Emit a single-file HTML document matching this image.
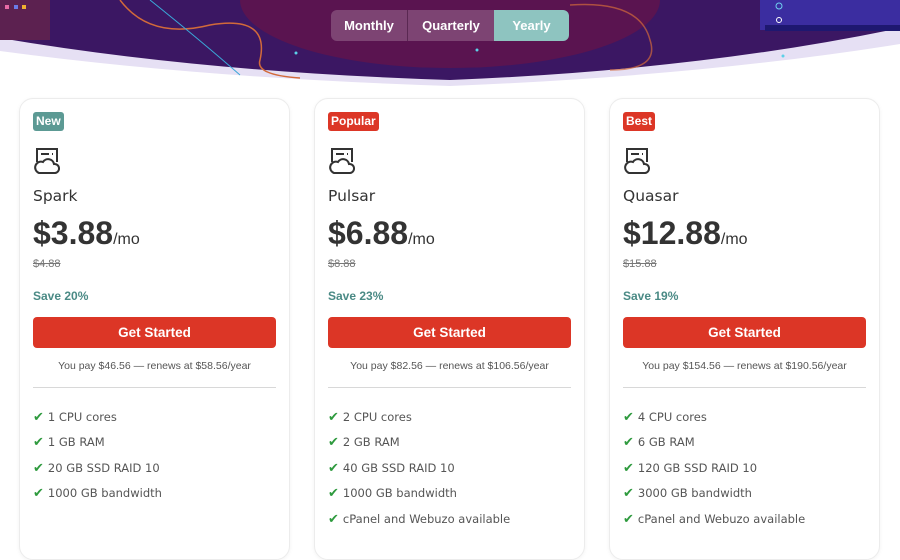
<!DOCTYPE html>
<html><head><style>
body{margin:0;width:900px;height:542px;overflow:hidden;background:#fff;font-family:"Liberation Sans",sans-serif;position:relative}
.hdr{position:absolute;left:0;top:0}
.tog{position:absolute;left:331px;top:10px;height:31px;display:flex;border-radius:6px;overflow:hidden;font-weight:bold;font-size:13px;color:#fff}
.tog div{display:flex;align-items:center;justify-content:center;background:#7d4473}
.card{position:absolute;top:98px;width:269px;height:460px;border:1px solid #ececec;border-radius:14px;background:#fff;box-shadow:0 1px 4px rgba(0,0,0,.05)}
.in{position:absolute;left:13px;right:13px;top:0}
.badge{position:absolute;top:13px;height:19px;line-height:19px;padding:0 3px;border-radius:3px;color:#fff;font-weight:bold;font-size:12px}
.icon{position:absolute;top:47px}
.name{position:absolute;top:88px;font-size:15.5px;color:#333;font-family:"DejaVu Sans",sans-serif}
.price{position:absolute;top:116px;font-size:32px;font-weight:bold;color:#333;white-space:nowrap}
.price span{font-size:16px;font-weight:normal}
.old{position:absolute;top:159px;font-size:11px;color:#777;text-decoration:line-through}
.save{position:absolute;top:190px;font-size:12px;font-weight:bold;color:#4a8a85}
.btn{position:absolute;top:218px;left:0;width:243px;height:31px;background:#dc3626;border-radius:4px;color:#fff;font-weight:bold;font-size:13.5px;text-align:center;line-height:31px}
.pay{position:absolute;top:261px;left:0;width:243px;text-align:center;font-size:10.5px;color:#555}
.hr{position:absolute;top:288px;left:0;width:243px;border-top:1px solid #d8d8d8}
.f{position:absolute;left:0;font-size:12.5px;color:#555;white-space:nowrap;font-family:"DejaVu Sans",sans-serif;font-size:11.5px}
.f b{color:#2e9a3e;font-size:13px;margin-right:4px}
</style></head><body>
<svg class="hdr" width="900" height="100" viewBox="0 0 900 100">
<path d="M0 0H900V38Q700 70 450 80Q200 72 0 45Z" fill="#e6e0f4" transform="translate(0,6)"/>
<path d="M0 0H900V28Q700 70 450 80Q200 72 0 38Z" fill="#3b1763"/>
<ellipse cx="450" cy="0" rx="210" ry="68" fill="#5a1450"/>
<path d="M120 0Q150 40 210 25Q270 15 260 60Q255 75 300 78" stroke="#d26a3a" stroke-width="1.5" fill="none"/>
<path d="M570 5Q640 0 650 40Q660 70 610 70" stroke="#d26a3a" stroke-width="1.5" fill="none" opacity=".7"/>
<path d="M150 0Q200 40 240 75" stroke="#3aa8d8" stroke-width="1" fill="none"/>
<rect x="0" y="0" width="50" height="40" fill="#5c2150"/>
<rect x="5" y="5" width="4" height="4" fill="#e86aa6"/><rect x="14" y="5" width="4" height="4" fill="#6a7ae8"/><rect x="22" y="5" width="4" height="4" fill="#f0b030"/>
<rect x="760" y="0" width="140" height="30" fill="#3b2da0"/>
<rect x="765" y="25" width="135" height="6" fill="#1e1870"/>
<circle cx="779" cy="6" r="3" stroke="#6fd0f0" fill="none"/><circle cx="779" cy="20" r="2.5" stroke="#fff" fill="none"/>
<circle cx="296" cy="53" r="1.5" fill="#5cd0e8"/><circle cx="477" cy="50" r="1.5" fill="#5cd0e8"/><circle cx="783" cy="56" r="1.5" fill="#5cd0e8"/>
</svg>
<div class="tog"><div style="width:76px">Monthly</div><div style="width:86px;border-left:1px solid #5a2852">Quarterly</div><div style="width:75px;background:#8ec4c0">Yearly</div></div>

<div class="card" style="left:19px"><div class="in">
<div class="badge" style="background:#5c9a94">New</div>
<svg class="icon" width="28" height="30" viewBox="0 0 28 30" fill="none" stroke="#333" stroke-width="2"><path d="M4 16V3H24V16"/><path d="M8 8H16M19 8H20"/><path d="M6 27H22A4.5 4.5 0 0 0 21 18A6 6 0 0 0 10 16A5.5 5.5 0 0 0 6 27Z"/></svg>
<div class="name">Spark</div>
<div class="price">$3.88<span>/mo</span></div>
<div class="old">$4.88</div>
<div class="save">Save 20%</div>
<div class="btn">Get Started</div>
<div class="pay">You pay $46.56 — renews at $58.56/year</div>
<div class="hr"></div>
<div class="f" style="top:311px"><b>✔</b>1 CPU cores</div>
<div class="f" style="top:336px"><b>✔</b>1 GB RAM</div>
<div class="f" style="top:362px"><b>✔</b>20 GB SSD RAID 10</div>
<div class="f" style="top:387px"><b>✔</b>1000 GB bandwidth</div>
</div></div>

<div class="card" style="left:314px"><div class="in">
<div class="badge" style="background:#dc3626">Popular</div>
<svg class="icon" width="28" height="30" viewBox="0 0 28 30" fill="none" stroke="#333" stroke-width="2"><path d="M4 16V3H24V16"/><path d="M8 8H16M19 8H20"/><path d="M6 27H22A4.5 4.5 0 0 0 21 18A6 6 0 0 0 10 16A5.5 5.5 0 0 0 6 27Z"/></svg>
<div class="name">Pulsar</div>
<div class="price">$6.88<span>/mo</span></div>
<div class="old">$8.88</div>
<div class="save">Save 23%</div>
<div class="btn">Get Started</div>
<div class="pay">You pay $82.56 — renews at $106.56/year</div>
<div class="hr"></div>
<div class="f" style="top:311px"><b>✔</b>2 CPU cores</div>
<div class="f" style="top:336px"><b>✔</b>2 GB RAM</div>
<div class="f" style="top:362px"><b>✔</b>40 GB SSD RAID 10</div>
<div class="f" style="top:387px"><b>✔</b>1000 GB bandwidth</div>
<div class="f" style="top:413px"><b>✔</b>cPanel and Webuzo available</div>
</div></div>

<div class="card" style="left:609px"><div class="in">
<div class="badge" style="background:#dc3626">Best</div>
<svg class="icon" width="28" height="30" viewBox="0 0 28 30" fill="none" stroke="#333" stroke-width="2"><path d="M4 16V3H24V16"/><path d="M8 8H16M19 8H20"/><path d="M6 27H22A4.5 4.5 0 0 0 21 18A6 6 0 0 0 10 16A5.5 5.5 0 0 0 6 27Z"/></svg>
<div class="name">Quasar</div>
<div class="price">$12.88<span>/mo</span></div>
<div class="old">$15.88</div>
<div class="save">Save 19%</div>
<div class="btn">Get Started</div>
<div class="pay">You pay $154.56 — renews at $190.56/year</div>
<div class="hr"></div>
<div class="f" style="top:311px"><b>✔</b>4 CPU cores</div>
<div class="f" style="top:336px"><b>✔</b>6 GB RAM</div>
<div class="f" style="top:362px"><b>✔</b>120 GB SSD RAID 10</div>
<div class="f" style="top:387px"><b>✔</b>3000 GB bandwidth</div>
<div class="f" style="top:413px"><b>✔</b>cPanel and Webuzo available</div>
</div></div>
</body></html>
